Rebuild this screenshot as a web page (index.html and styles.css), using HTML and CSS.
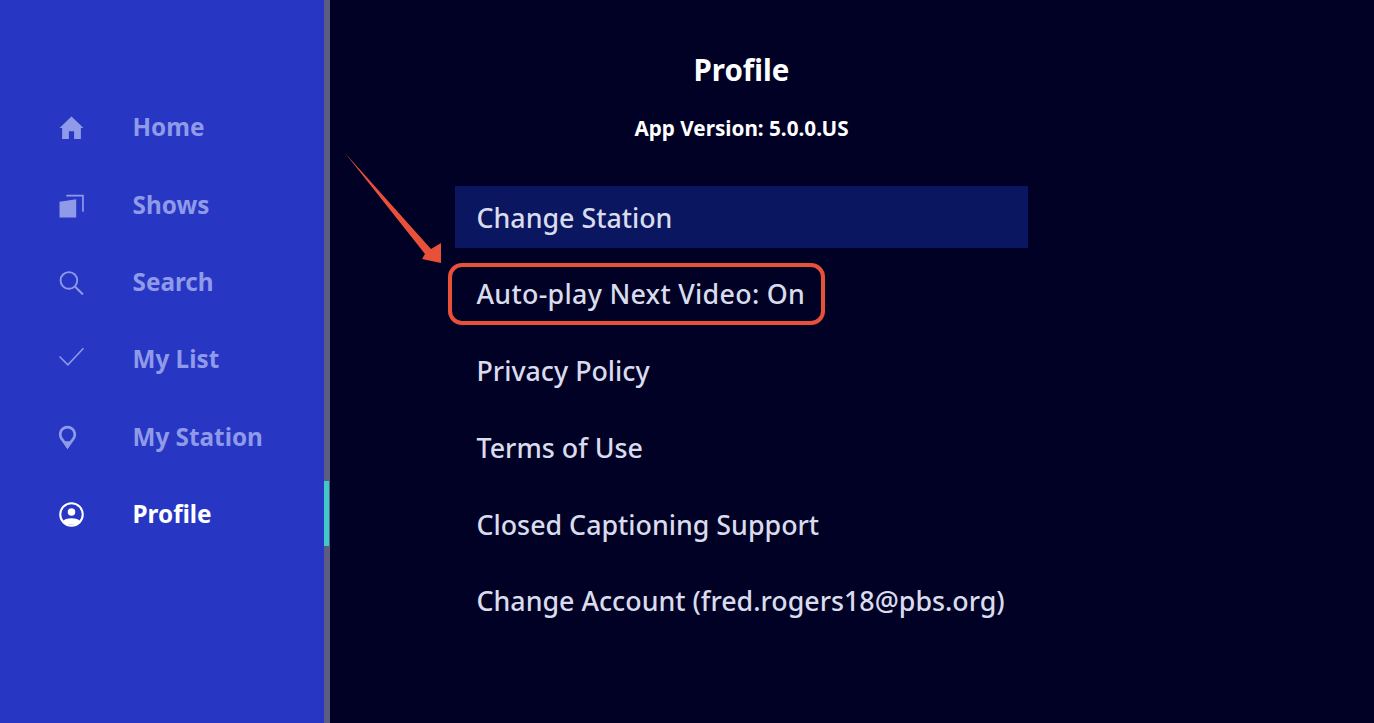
FILE: index.html
```html
<!DOCTYPE html>
<html lang="en">
  <head>
    <meta charset="UTF-8" />
    <meta name="viewport" content="width=device-width, initial-scale=1.0" />
    <title>Profile</title>
    <link rel="stylesheet" href="styles.css">
  </head>
  <body>
    <nav class="sidebar">
      <a class="nav-item">
        <svg class="nav-icon" viewBox="0 0 24 24"><path d="M12 1.500 23.500 12.500 21 12.500 21 23 14.500 23 14.500 15.500 9.500 15.500 9.500 23 3 23 3 12.500 .5 12.500Z" fill="currentColor"/></svg>
        <span>Home</span>
      </a>
      <a class="nav-item">
        <svg class="nav-icon" viewBox="0 0 24 24"><path d="M.5 8.500 16.500 6 16.500 23.500 .5 23.500Z" fill="currentColor"/><path d="M7 2.500H23V18" fill="none" stroke="currentColor" stroke-width="1.600"/></svg>
        <span>Shows</span>
      </a>
      <a class="nav-item">
        <svg class="nav-icon" viewBox="0 0 24 24"><circle cx="9.500" cy="10" r="8" fill="none" stroke="currentColor" stroke-width="1.800"/><path d="M15.500 16 23 23.500" fill="none" stroke="currentColor" stroke-width="2"/></svg>
        <span>Search</span>
      </a>
      <a class="nav-item">
        <svg class="nav-icon icon-up" viewBox="0 0 24 24"><path d="M.5 12 8.500 20 23.500 4" fill="none" stroke="currentColor" stroke-width="1.400"/></svg>
        <span>My List</span>
      </a>
      <a class="nav-item">
        <svg class="nav-icon icon-pin" viewBox="0 0 16 24"><path d="M8 21 2.600 13.500A7 7 0 1 1 13.400 13.500Z" fill="none" stroke="currentColor" stroke-width="2.600" stroke-linejoin="round"/><path d="M4 15.500h8L8 23.500Z" fill="currentColor"/></svg>
        <span>My Station</span>
      </a>
      <a class="nav-item active">
        <svg class="nav-icon" viewBox="0 0 24 24"><circle cx="12" cy="12" r="10.800" fill="none" stroke="currentColor" stroke-width="2"/><circle cx="12" cy="9.500" r="3.600" fill="currentColor"/><path d="M3.500 18.500C6 14.500 18 14.500 20.500 18.500 18 23 6 23 3.500 18.500Z" fill="currentColor"/></svg>
        <span>Profile</span>
      </a>
    </nav>
    <div class="scrollbar"><div class="scroll-thumb"></div></div>
    <main class="content">
      <div class="panel">
        <h1>Profile</h1>
        <p class="version">App Version: 5.0.0.US</p>
        <ul class="menu">
          <li class="selected">Change Station</li>
          <li class="marked">Auto-play Next Video: On</li>
          <li>Privacy Policy</li>
          <li>Terms of Use</li>
          <li>Closed Captioning Support</li>
          <li>Change Account (fred.rogers18@pbs.org)</li>
        </ul>
      </div>
    </main>
    <svg class="arrow" viewBox="0 0 98 110"><path d="M0 0 86 96 96 90 96 110 77 106 80 101Z" fill="#e8503a"/></svg>
  </body>
</html>
```

FILE: styles.css
```css
html, body {
  height: 100%;
}
body {
  margin: 0;
  display: flex;
  min-height: 723px;
  overflow: hidden;
  background: #010125;
  font-family: "Noto Sans", sans-serif;
}
.sidebar {
  width: 324px;
  flex: none;
  box-sizing: border-box;
  padding: 88px 0 0 59px;
  background: #2836c4;
}
.nav-item {
  display: flex;
  align-items: center;
  height: 77.400px;
  color: #8f9ae8;
  font-size: 24.300px;
  font-weight: 700;
}
.nav-item.active {
  color: #fff;
}
.nav-icon {
  position: relative;
  top: 1px;
  width: 25px;
  height: 25px;
  flex: none;
  margin-right: 48.500px;
}
.icon-up {
  top: -2px;
}
.icon-pin {
  width: 17px;
  margin-right: 56.500px;
}
.scrollbar {
  width: 6px;
  flex: none;
  background: #5a5c84;
}
.scroll-thumb {
  width: 5px;
  height: 65px;
  margin-top: 481px;
  background: #3fc9cb;
}
.content {
  flex: 1;
  padding-left: 125px;
}
.panel {
  width: 573px;
  text-align: center;
}
h1 {
  margin: 51px 0 0;
  color: #fff;
  font-size: 29.500px;
  line-height: 38px;
  font-weight: 700;
}
.version {
  margin: 27px 0 0;
  color: #fff;
  font-size: 20.700px;
  line-height: 24px;
  font-weight: 700;
}
.menu {
  list-style: none;
  margin: 46px 0 0;
  padding: 0;
  text-align: left;
}
.menu li {
  position: relative;
  display: flex;
  align-items: center;
  height: 62px;
  margin-bottom: 14.800px;
  padding-left: 21.500px;
  color: #d9dcec;
  font-size: 26.800px;
  font-weight: 500;
}
.menu .selected {
  background: #0a1660;
}
.menu .marked {
  letter-spacing: .3px;
}
.marked::after {
  content: "";
  position: absolute;
  left: -7px;
  top: 0;
  width: 377px;
  height: 62px;
  box-sizing: border-box;
  border: 4px solid #e8503a;
  border-radius: 14px;
}
.arrow {
  position: absolute;
  left: 345px;
  top: 153px;
  width: 98px;
  height: 110px;
}
```
